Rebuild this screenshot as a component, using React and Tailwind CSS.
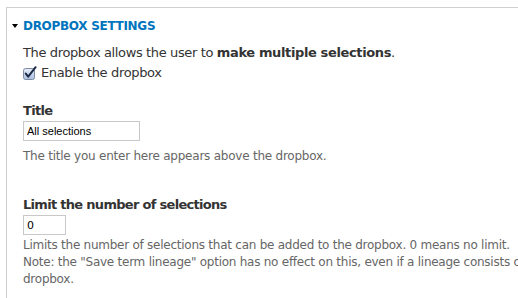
function CheckIcon() {
  return (
    <svg width="14" height="14" viewBox="0 0 14 14" className="mr-[4px] shrink-0">
      <defs>
        <linearGradient id="cb" x1="0" y1="0" x2="0" y2="1">
          <stop offset="0" stopColor="#e8eef8" />
          <stop offset="1" stopColor="#a9bfe0" />
        </linearGradient>
      </defs>
      <rect x="0.5" y="2.5" width="11" height="11" rx="2" fill="url(#cb)" stroke="#7d8ba3" />
      <path d="M2.8 7.6 L5.2 10.6 L12.6 1.2" fill="none" stroke="#1c2a48" strokeWidth="2" strokeLinecap="round" strokeLinejoin="round" />
    </svg>
  );
}

export default function App() {
  return (
    <div className="w-[518px] h-[298px] overflow-hidden bg-white pl-[6px] pt-[7px] font-['DejaVu_Sans',sans-serif] text-[#333]">
      <div className="w-[600px] h-[320px] border-t border-l border-[#d0d0d0]">
        <div className="flex items-center pl-[5px] pt-[10px] h-[25px]">
          <span className="w-0 h-0 border-l-[3px] border-r-[3px] border-t-[4px] border-l-transparent border-r-transparent border-t-black mr-[5px]" />
          <span className="text-[12px] font-bold text-[#0074bd] tracking-[-0.3px] uppercase">Dropbox settings</span>
        </div>
        <div className="pl-[16px] pt-[11px]">
          <p className="text-[13px] leading-[18px] tracking-[-0.37px]">
            The dropbox allows the user to <b>make multiple selections</b>.
          </p>
          <label className="flex items-center mt-[2px] text-[13px] leading-[18px] tracking-[-0.35px]">
            <CheckIcon />
            Enable the dropbox
          </label>
          <div className="mt-[20px] text-[13px] font-bold leading-[18px] tracking-[-0.7px]">Title</div>
          <input
            type="text"
            defaultValue="All selections"
            className="block mt-[1px] w-[117px] h-[20px] border border-[#c8c8c8] px-[3px] text-[11px] font-['Liberation_Sans',sans-serif] text-black outline-none"
          />
          <p className="mt-[7px] text-[12px] leading-[17px] text-[#666] tracking-[-0.23px]">The title you enter here appears above the dropbox.</p>
          <div className="mt-[31px] text-[13px] font-bold leading-[18px] tracking-[-0.7px]">Limit the number of selections</div>
          <input
            type="text"
            defaultValue="0"
            className="block mt-[1px] w-[43px] h-[20px] border border-[#c8c8c8] px-[3px] text-[11px] text-black outline-none"
          />
          <p className="mt-[2px] text-[12px] leading-[17px] text-[#666] tracking-[-0.25px] whitespace-nowrap">
            Limits the number of selections that can be added to the dropbox. 0 means no limit.
            <br />
            Note: the "Save term lineage" option has no effect on this, even if a lineage consists of multiple terms in the
            <br />
            dropbox.
          </p>
        </div>
      </div>
    </div>
  );
}
